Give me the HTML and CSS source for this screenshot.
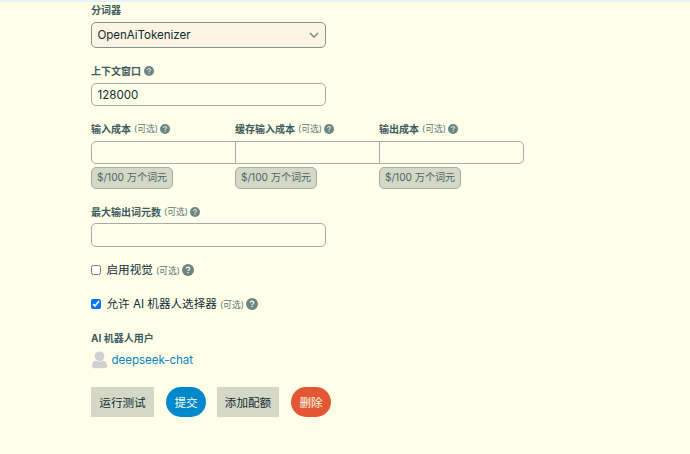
FILE: index.html
```html
<!DOCTYPE html>
<html lang="zh-CN">
<head>
<meta charset="UTF-8">
<title>LLM</title>
<link rel="stylesheet" href="styles.css">
</head>
<body>
<svg width="0" height="0" class="sprite">
	<symbol id="help" viewBox="0 0 512 512">
		<circle cx="256" cy="256" r="256" fill="#6d8583"/>
		<path d="M180 202c4-50 34-72 79-72 43 0 76 25 76 65 0 58-77 54-77 106" fill="none" stroke="#ffffe9" stroke-width="50"/>
		<circle cx="258" cy="362" r="33" fill="#ffffe9"/>
	</symbol>
</svg>
<form class="form" action="">
	<div class="field tokenizer">
		<label class="title">分词器</label>
		<div class="select">
			<span>OpenAiTokenizer</span>
			<svg class="chevron" viewBox="0 0 10 6"><path d="M1 1l4 4 4-4"/></svg>
		</div>
	</div>
	<div class="field context">
		<label class="title">上下文窗口<svg class="help"><use href="#help"/></svg></label>
		<input class="input" type="text" value="128000">
	</div>
	<div class="costs">
		<div class="field">
			<label class="title">输入成本<span class="optional">(可选)</span><svg class="help"><use href="#help"/></svg></label>
			<input class="input" type="text">
			<span class="unit">$/100 万个词元</span>
		</div>
		<div class="field">
			<label class="title">缓存输入成本<span class="optional">(可选)</span><svg class="help"><use href="#help"/></svg></label>
			<input class="input" type="text">
			<span class="unit">$/100 万个词元</span>
		</div>
		<div class="field">
			<label class="title">输出成本<span class="optional">(可选)</span><svg class="help"><use href="#help"/></svg></label>
			<input class="input" type="text">
			<span class="unit">$/100 万个词元</span>
		</div>
	</div>
	<div class="field output">
		<label class="title">最大输出词元数<span class="optional">(可选)</span><svg class="help"><use href="#help"/></svg></label>
		<input class="input" type="text">
	</div>
	<label class="check"><input type="checkbox"><span>启用视觉</span><span class="optional">(可选)</span><svg class="help"><use href="#help"/></svg></label>
	<label class="check"><input type="checkbox" checked><span>允许 AI 机器人选择器</span><span class="optional">(可选)</span><svg class="help"><use href="#help"/></svg></label>
	<div class="field bot">
		<label class="title">AI 机器人用户</label>
		<a class="user" href="#">
			<svg class="avatar" viewBox="0 0 16 17"><circle cx="8" cy="5" r="4.6"/><path d="M1 13.2C1 10.8 2.6 9.3 4.6 9.3q3.4 1.8 6.8 0c2 0 3.6 1.5 3.6 3.9v1.3c0 1.2-.9 1.9-2 1.9H3c-1.1 0-2-.7-2-1.9z"/></svg>
			<span>deepseek-chat</span>
		</a>
	</div>
	<div class="buttons">
		<button type="button" class="btn test">运行测试</button>
		<button type="button" class="btn round submit">提交</button>
		<button type="button" class="btn quota">添加配额</button>
		<button type="button" class="btn round delete">删除</button>
	</div>
</form>
</body>
</html>
```

FILE: styles.css
```css
* {
	box-sizing: border-box;
}
body {
	margin: 0;
	height: 454px;
	overflow: hidden;
	border-top: 2px solid #e5f2fb;
	background: #ffffe9;
	color: #0f2c35;
	font: 11.6px/16px Inter, "Noto Sans CJK SC", sans-serif;
}
.sprite {
	display: block;
}
.form {
	width: 433px;
	margin-left: 91px;
}
.field {
	display: flex;
	flex-direction: column;
	align-items: flex-start;
}
.title {
	display: flex;
	align-items: center;
	height: 16px;
	margin-bottom: 4px;
	color: #3b5b60;
	font-size: 10px;
	font-weight: 700;
	white-space: nowrap;
}
.optional {
	margin-left: 3px;
	color: #5c7778;
	font-size: 8.8px;
	font-weight: 400;
}
.help {
	width: 10px;
	height: 10px;
	margin-left: 2px;
}
.context .help {
	margin-left: 3px;
}
.select,
.input {
	width: 235px;
	border: 1px solid #a0adaa;
	border-radius: 5px;
	padding: 0 6px 0 5.5px;
	color: #0f2c35;
	font: inherit;
}
.select {
	display: flex;
	align-items: center;
	justify-content: space-between;
	height: 26px;
	border-color: #80958f;
	background: #fdf5e1;
}
.select span {
	letter-spacing: -.06px;
}
.chevron {
	width: 10px;
	height: 6px;
	fill: none;
	stroke: #6d8583;
	stroke-width: 1.4;
}
.input {
	height: 23px;
	background: #ffffe9;
}
.context {
	margin-top: 15px;
}
.costs {
	display: flex;
	margin-top: 15px;
}
.costs .field {
	width: 144px;
}
.costs .input {
	width: 145px;
	border-radius: 0;
}
.costs .field:first-child .input {
	border-radius: 5px 0 0 5px;
}
.costs .field:last-child .input {
	border-radius: 0 5px 5px 0;
}
.unit {
	height: 22px;
	margin-top: 3px;
	padding: 0 5px;
	border: 1px solid #a0adaa;
	border-radius: 5px;
	background: #d6d8c7;
	color: #45656a;
	font-size: 10.1px;
	line-height: 19px;
	white-space: nowrap;
}
.output {
	margin: 15px 0 13px;
}
.output .title {
	margin-bottom: 3px;
}
.output .input {
	height: 24px;
}
.check {
	display: flex;
	align-items: center;
	height: 20px;
	margin-bottom: 14px;
}
.check input {
	width: 10px;
	height: 10px;
	margin: 0 5.5px 0 0;
}
.check .optional {
	margin-top: 1px;
}
.check .help {
	width: 12px;
	height: 12px;
	margin-left: 2.5px;
}
.bot {
	margin-top: 16px;
}
.bot .title {
	margin-bottom: 5px;
}
.user {
	display: flex;
	align-items: center;
	color: #0a82c8;
	text-decoration: none;
}
.user span {
	letter-spacing: -.06px;
}
.avatar {
	width: 17px;
	height: 18px;
	margin: 0 3.5px -1px 0;
	fill: #d1d1d1;
}
.buttons {
	display: flex;
	margin-top: 19px;
}
.btn {
	height: 30px;
	border: 0;
	padding: 1px 0 0;
	background: #d6d8c7;
	color: #0f2c35;
	font: inherit;
}
.test {
	width: 63px;
}
.quota {
	width: 62px;
}
.round {
	width: 40px;
	border-radius: 15px;
	color: #ffffe9;
}
.submit {
	margin: 0 11px 0 12px;
	background: #0088cc;
}
.delete {
	margin-left: 12px;
	background: #e45735;
}
```
